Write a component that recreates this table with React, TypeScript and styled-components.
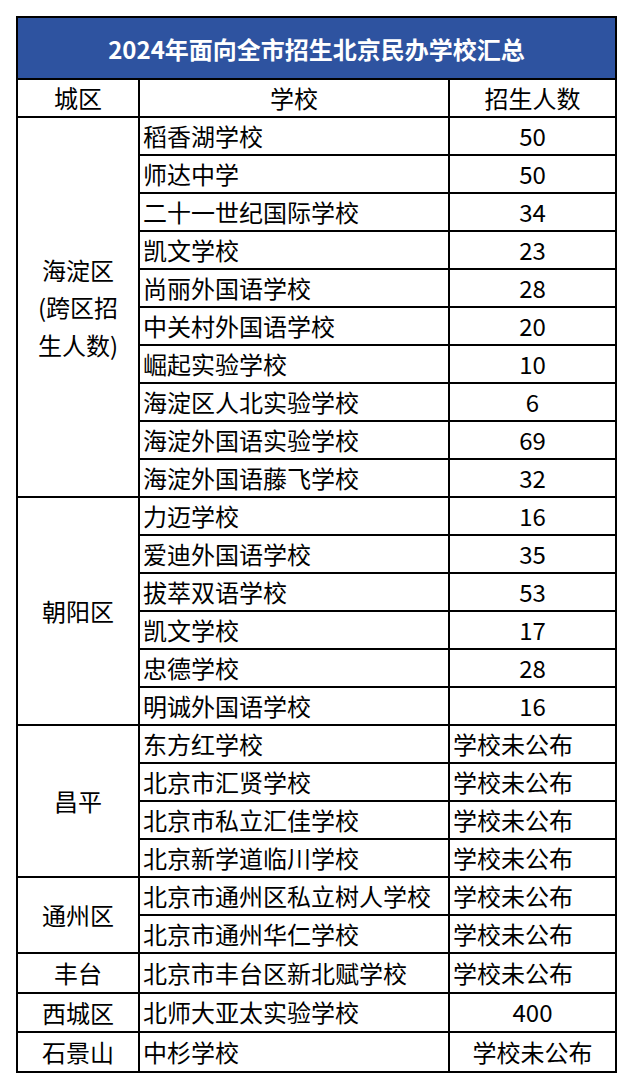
import React from 'react'
import styled, { createGlobalStyle } from 'styled-components'

const GlobalStyle = createGlobalStyle`
  body {
    margin: 0;
    background: #fff;
    font-family: "Noto Sans CJK SC", "Noto Sans", sans-serif;
    color: #000;
  }
`

const Table = styled.table`
  border-collapse: collapse;
  margin: 16px 0 0 16px;
  width: 601px;
  table-layout: fixed;
  border: 2px solid #000;
`

const TitleCell = styled.th`
  height: 60px;
  background: #2e53a0;
  color: #fff;
  font-size: 24px;
  font-weight: 700;
  text-align: center;
  border: 2px solid #000;
  padding: 0;
`

const Cell = styled.td<{ $align?: 'left' | 'center' }>`
  height: 36px;
  padding: 0 0 0 3px;
  border: 2px solid #000;
  font-size: 24px;
  line-height: 34px;
  text-align: ${(p) => p.$align || 'left'};
  white-space: nowrap;
  overflow: hidden;
  ${(p) => (p.$align === 'center' ? 'padding: 0;' : '')}
`

const DistrictLine = styled.div`
  line-height: 37.5px;
`

interface Row {
  school: string
  count: string
  centered?: boolean
}

interface Group {
  district: string[]
  rows: Row[]
}

const tbd = '学校未公布'

const groups: Group[] = [
  {
    district: ['海淀区', '(跨区招', '生人数)'],
    rows: [
      { school: '稻香湖学校', count: '50' },
      { school: '师达中学', count: '50' },
      { school: '二十一世纪国际学校', count: '34' },
      { school: '凯文学校', count: '23' },
      { school: '尚丽外国语学校', count: '28' },
      { school: '中关村外国语学校', count: '20' },
      { school: '崛起实验学校', count: '10' },
      { school: '海淀区人北实验学校', count: '6' },
      { school: '海淀外国语实验学校', count: '69' },
      { school: '海淀外国语藤飞学校', count: '32' },
    ],
  },
  {
    district: ['朝阳区'],
    rows: [
      { school: '力迈学校', count: '16' },
      { school: '爱迪外国语学校', count: '35' },
      { school: '拔萃双语学校', count: '53' },
      { school: '凯文学校', count: '17' },
      { school: '忠德学校', count: '28' },
      { school: '明诚外国语学校', count: '16' },
    ],
  },
  {
    district: ['昌平'],
    rows: [
      { school: '东方红学校', count: tbd },
      { school: '北京市汇贤学校', count: tbd },
      { school: '北京市私立汇佳学校', count: tbd },
      { school: '北京新学道临川学校', count: tbd },
    ],
  },
  {
    district: ['通州区'],
    rows: [
      { school: '北京市通州区私立树人学校', count: tbd },
      { school: '北京市通州华仁学校', count: tbd },
    ],
  },
  { district: ['丰台'], rows: [{ school: '北京市丰台区新北赋学校', count: tbd }] },
  { district: ['西城区'], rows: [{ school: '北师大亚太实验学校', count: '400' }] },
  { district: ['石景山'], rows: [{ school: '中杉学校', count: tbd, centered: true }] },
]

export default function App() {
  return (
    <>
      <GlobalStyle />
      <Table>
        <colgroup>
          <col style={{ width: 122 }} />
          <col style={{ width: 310 }} />
          <col />
        </colgroup>
        <thead>
          <tr>
            <TitleCell colSpan={3}>2024年面向全市招生北京民办学校汇总</TitleCell>
          </tr>
          <tr>
            <Cell $align="center">城区</Cell>
            <Cell $align="center">学校</Cell>
            <Cell $align="center">招生人数</Cell>
          </tr>
        </thead>
        <tbody>
          {groups.map((g) =>
            g.rows.map((r, i) => (
              <tr key={g.district[0] + r.school}>
                {i === 0 && (
                  <Cell $align="center" rowSpan={g.rows.length}>
                    {g.district.map((line) => (
                      <DistrictLine key={line}>{line}</DistrictLine>
                    ))}
                  </Cell>
                )}
                <Cell>{r.school}</Cell>
                <Cell $align={r.count === tbd && !r.centered ? 'left' : 'center'}>{r.count}</Cell>
              </tr>
            ))
          )}
        </tbody>
      </Table>
    </>
  )
}
